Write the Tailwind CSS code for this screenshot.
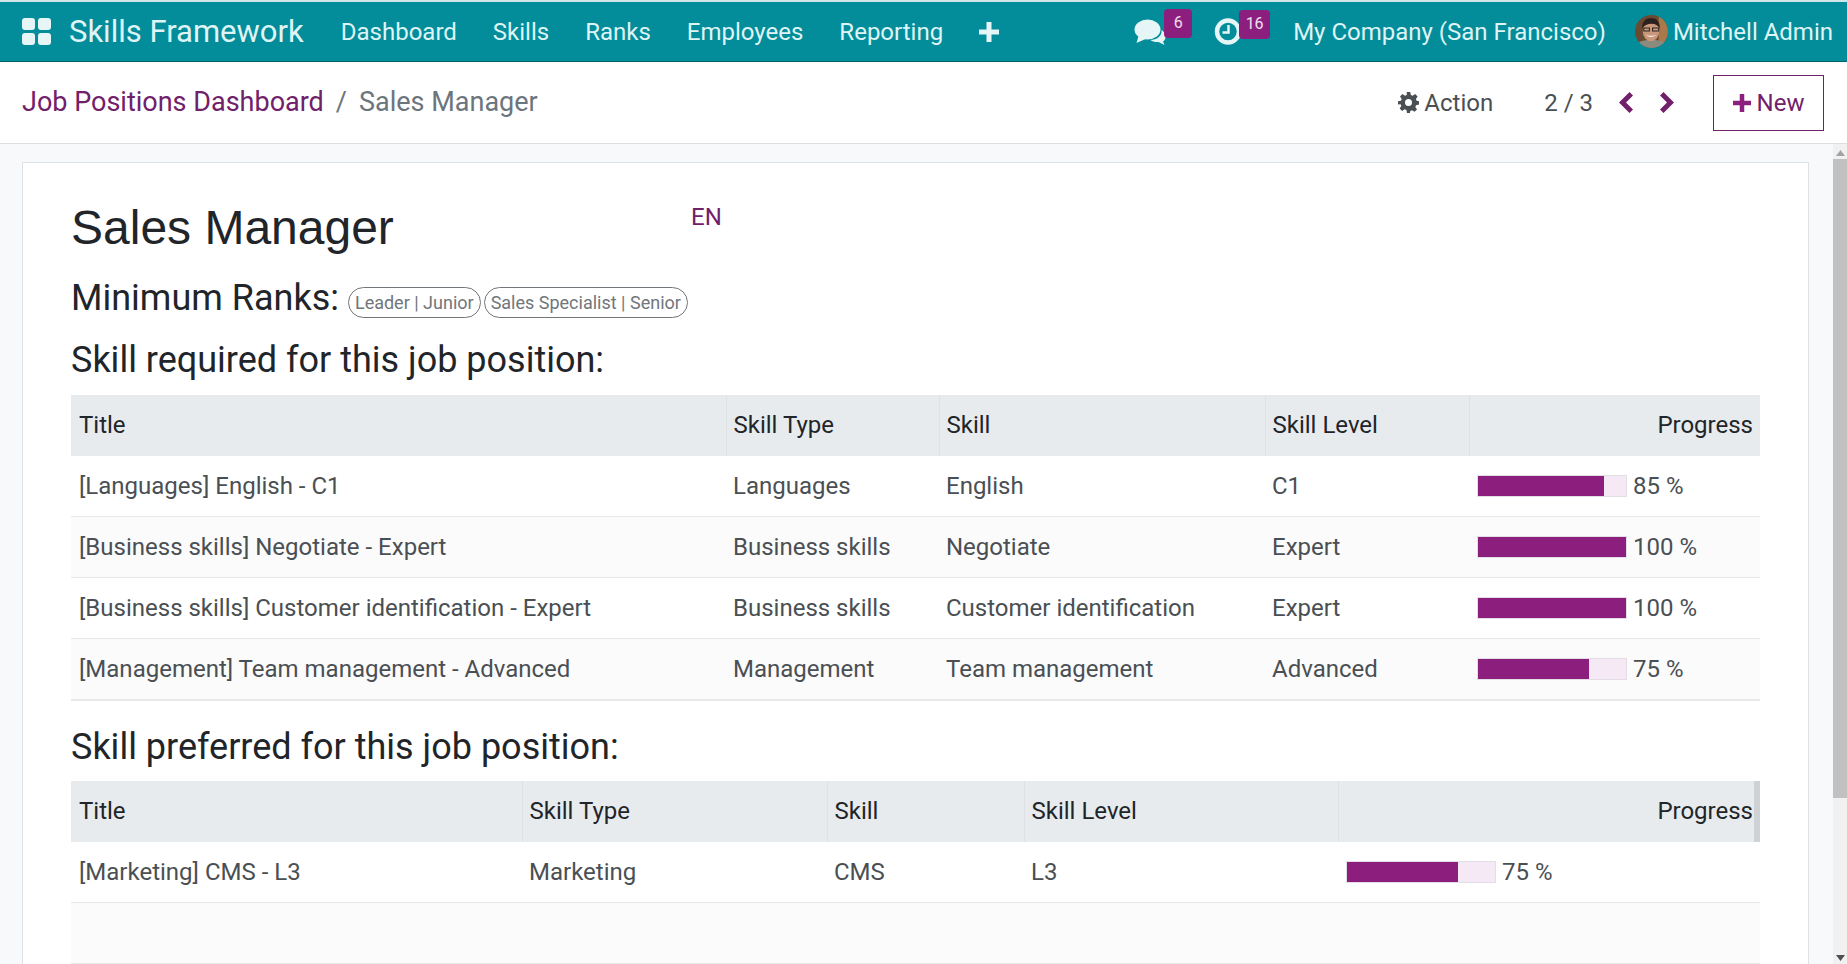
<!DOCTYPE html>
<html lang="en">
<head>
<meta charset="utf-8">
<title>Skills Framework</title>
<script src="https://cdn.jsdelivr.net/npm/@tailwindcss/browser@4"></script>
</head>
<body class="h-screen overflow-hidden bg-white font-['Roboto',sans-serif] text-[24px] text-[#4a4f54]">
<div class="flex h-full flex-col">
  <div class="h-[2px] shrink-0 bg-[#cfe6e8]"></div>
  <nav class="flex h-[60px] shrink-0 items-center border-b border-[#04606a] bg-[#038d9a] text-[#dff4f5]">
    <svg class="ml-[22px] h-[27px] w-[29px]" viewBox="0 0 29 27" fill="#e6f6f7"><rect x="0" y="0" width="13" height="12" rx="3"/><rect x="16" y="0" width="13" height="12" rx="3"/><rect x="0" y="15" width="13" height="12" rx="3"/><rect x="16" y="15" width="13" height="12" rx="3"/></svg>
    <span class="ml-[18px] pt-[1px] text-[31px]">Skills Framework</span>
    <div class="ml-[37px] flex items-center gap-[36px]">
      <span>Dashboard</span><span>Skills</span><span>Ranks</span><span>Employees</span><span>Reporting</span>
      <svg class="h-[20px] w-[20px]" viewBox="0 0 20 20" fill="#e6f6f7"><path d="M7.500 0h5v7.500h7.500v5h-7.500v7.500h-5v-7.500h-7.500v-5h7.500z"/></svg>
    </div>
    <div class="ml-auto flex items-center">
      <span class="relative mr-[47px] flex">
        <svg class="h-[26px] w-[33px]" viewBox="0 0 32 26" fill="#e6f6f7"><ellipse cx="13" cy="10.500" rx="13" ry="10"/><path d="M4 17 2 24l9-4z"/><path d="M27 11c3 2 5 5 4 8-.5 2-1.500 3-2.500 3.500l1.500 3.500-6-3c-3 .3-6-.3-8-2 6 0 12-4 11-10z"/></svg>
        <span class="absolute left-[30px] top-[-10px] flex h-[29px] w-[28px] items-start justify-center rounded-[4px] bg-[#8c1f7e] pt-[2px] text-[16px] text-[#f0e0ee]">6</span>
      </span>
      <span class="relative flex">
        <svg class="h-[27px] w-[28px]" viewBox="0 0 27 27" fill="none" stroke="#e6f6f7"><circle cx="13.500" cy="13.500" r="11" stroke-width="4.500"/><path d="M14 7v7.500H8" stroke-width="2.500"/></svg>
        <span class="absolute left-[25px] top-[-8px] flex h-[29px] w-[31px] items-start justify-center rounded-[4px] bg-[#8c1f7e] pt-[2px] text-[16px] text-[#f0e0ee]">16</span>
      </span>
      <span class="ml-[51px]">My Company (San Francisco)</span>
      <svg class="ml-[29px] h-[33px] w-[33px]" viewBox="0 0 32 32">
        <defs><clipPath id="av"><circle cx="16" cy="16" r="16"/></clipPath></defs>
        <g clip-path="url(#av)">
          <rect width="32" height="32" fill="#6b4a33"/>
          <rect x="23" width="9" height="32" fill="#a9794a"/>
          <path d="M0 32c1-6 8-8 16-8s15 2 16 8z" fill="#8a8a7e"/>
          <ellipse cx="15.500" cy="15.500" rx="8" ry="10" fill="#c9977a"/>
          <path d="M7 13c-.5-7 4-10 8.500-10S24.500 6 24 13c-2-3-4-4.500-8-4.500S9 10 7 13z" fill="#2c211c"/>
          <path d="M8.500 12.500h5.500v3H8.500zM17 12.500h6v3h-6z" fill="none" stroke="#2b2522" stroke-width="1"/>
          <path d="M10.500 19.500c3 2.500 7 2.500 10 0-3 .8-7 .8-10 0z" fill="#f4efe9"/>
        </g>
      </svg>
      <span class="ml-[5px] mr-[14px]">Mitchell Admin</span>
    </div>
  </nav>

  <header class="flex h-[82px] shrink-0 items-center border-b border-[#dcdfe2] bg-white">
    <div class="ml-[22px] flex items-center text-[27px]">
      <span class="text-[#71206a]">Job Positions Dashboard</span>
      <span class="mx-[12px] text-[#6c757d]">/</span>
      <span class="text-[#6c757d]">Sales Manager</span>
    </div>
    <div class="ml-auto flex items-center">
      <svg class="h-[21px] w-[21px]" viewBox="0 0 24 24" fill="#4a4f54"><path fill-rule="evenodd" d="M10 0h4l.7 3.400 2 .8L19.600 2.300l2.800 2.800-1.900 2.900.8 2L24 10.700v3.600l-3.400.7-.8 2 1.900 2.900-2.800 2.800-2.900-1.900-2 .8L13.700 24h-3.400l-.7-3.400-2-.8-2.900 1.900-2.800-2.800 1.900-2.900-.8-2L0 14.300v-3.600L3.400 10l.8-2-1.900-2.900 2.800-2.800 2.900 1.900 2-.8zM12 8a4 4 0 1 0 0 8 4 4 0 0 0 0-8z"/></svg>
      <span class="ml-[5px]">Action</span>
      <span class="ml-[51px]">2 / 3</span>
      <svg class="ml-[26px] h-[21px] w-[14px]" viewBox="0 0 14 21" fill="#71206a"><path d="M10.500 0 14 3.500 7 10.500l7 7-3.500 3.500L0 10.500z"/></svg>
      <svg class="ml-[27px] h-[21px] w-[14px]" viewBox="0 0 14 21" fill="#71206a"><path d="M3.500 0 0 3.500l7 7-7 7L3.500 21 14 10.500z"/></svg>
      <button class="ml-[39px] mr-[23px] flex h-[56px] w-[111px] items-center justify-center border border-[#71206a] text-[#71206a]">
        <svg class="mr-[6px] h-[18px] w-[18px]" viewBox="0 0 20 20" fill="#8c1f7e"><path d="M7.500 0h5v7.500h7.500v5h-7.500v7.500h-5v-7.500h-7.500v-5h7.500z"/></svg>New
      </button>
    </div>
  </header>

  <div class="flex min-h-0 flex-1 overflow-hidden bg-[#f8f9fa]">
    <main class="min-w-0 flex-1 pl-[22px] pr-[24px] pt-[18px]">
      <div class="h-[900px] border border-[#dee2e6] bg-white pl-[48px] pr-[48px]">
        <div class="flex h-[110px] items-start">
          <h1 class="mt-[37px] w-[620px] font-['Liberation_Sans',sans-serif] text-[48px] leading-[56px] text-[#212529]">Sales Manager</h1>
          <span class="mt-[36px] text-[#71206a]">EN</span>
        </div>
        <div class="flex h-[50px] items-center">
          <span class="text-[36px] leading-[50px] text-[#212529]">Minimum Ranks:</span>
          <span class="ml-[9px] mt-[9px] flex h-[31px] items-center rounded-full border border-[#71767b] px-[6px] text-[18px] text-[#71767b]">Leader | Junior</span>
          <span class="ml-[3px] mt-[9px] flex h-[31px] items-center rounded-full border border-[#71767b] px-[6px] text-[18px] text-[#71767b]">Sales Specialist | Senior</span>
        </div>
        <h2 class="mt-[13px] h-[59px] text-[36px] leading-[48px] text-[#212529]">Skill required for this job position:</h2>

        <table class="w-[1689px] table-fixed border-b-2 border-[#e6e8ea]">
          <thead>
            <tr class="h-[61px] bg-[#e8ebee] text-[#212529]">
              <th class="w-[655px] px-[8px] pb-[2px] text-left font-normal">Title</th>
              <th class="w-[213px] border-l border-[#dfe2e5] px-[7px] pb-[2px] text-left font-normal">Skill Type</th>
              <th class="w-[326px] border-l border-[#dfe2e5] px-[7px] pb-[2px] text-left font-normal">Skill</th>
              <th class="w-[204px] border-l border-[#dfe2e5] px-[7px] pb-[2px] text-left font-normal">Skill Level</th>
              <th class="border-l border-[#dfe2e5] px-[7px] pb-[2px] text-right font-normal">Progress</th>
            </tr>
          </thead>
          <tbody>
            <tr class="h-[60px] border-b border-[#e6e8ea] bg-white">
              <td class="px-[8px]">[Languages] English - C1</td><td class="px-[7px]">Languages</td><td class="px-[7px]">English</td><td class="px-[7px]">C1</td>
              <td class="px-[8px]"><div class="flex items-center"><div class="h-[22px] w-[150px] border border-[#e3dde6] bg-[#f5e9f5]"><div class="h-full w-[85%] bg-[#8c1f7e]"></div></div><span class="ml-[6px]">85 %</span></div></td>
            </tr>
            <tr class="h-[61px] border-b border-[#e6e8ea] bg-[#fbfbfb]">
              <td class="px-[8px]">[Business skills] Negotiate - Expert</td><td class="px-[7px]">Business skills</td><td class="px-[7px]">Negotiate</td><td class="px-[7px]">Expert</td>
              <td class="px-[8px]"><div class="flex items-center"><div class="h-[22px] w-[150px] border border-[#e3dde6] bg-[#f5e9f5]"><div class="h-full w-full bg-[#8c1f7e]"></div></div><span class="ml-[6px]">100 %</span></div></td>
            </tr>
            <tr class="h-[61px] border-b border-[#e6e8ea] bg-white">
              <td class="px-[8px]">[Business skills] Customer identification - Expert</td><td class="px-[7px]">Business skills</td><td class="px-[7px]">Customer identification</td><td class="px-[7px]">Expert</td>
              <td class="px-[8px]"><div class="flex items-center"><div class="h-[22px] w-[150px] border border-[#e3dde6] bg-[#f5e9f5]"><div class="h-full w-full bg-[#8c1f7e]"></div></div><span class="ml-[6px]">100 %</span></div></td>
            </tr>
            <tr class="h-[62px] bg-[#fbfbfb]">
              <td class="px-[8px]">[Management] Team management - Advanced</td><td class="px-[7px]">Management</td><td class="px-[7px]">Team management</td><td class="px-[7px]">Advanced</td>
              <td class="px-[8px]"><div class="flex items-center"><div class="h-[22px] w-[150px] border border-[#e3dde6] bg-[#f5e9f5]"><div class="h-full w-[75%] bg-[#8c1f7e]"></div></div><span class="ml-[6px]">75 %</span></div></td>
            </tr>
          </tbody>
        </table>

        <h2 class="mt-[22px] h-[58px] text-[36px] leading-[48px] text-[#212529]">Skill preferred for this job position:</h2>

        <table class="w-[1689px] table-fixed">
          <thead>
            <tr class="h-[61px] bg-[#e8ebee] text-[#212529]">
              <th class="w-[451px] px-[8px] pb-[2px] text-left font-normal">Title</th>
              <th class="w-[305px] border-l border-[#dfe2e5] px-[7px] pb-[2px] text-left font-normal">Skill Type</th>
              <th class="w-[197px] border-l border-[#dfe2e5] px-[7px] pb-[2px] text-left font-normal">Skill</th>
              <th class="w-[314px] border-l border-[#dfe2e5] px-[7px] pb-[2px] text-left font-normal">Skill Level</th>
              <th class="relative border-l border-[#dfe2e5] px-[7px] pb-[2px] text-right font-normal">Progress<span class="absolute inset-y-0 right-0 w-[6px] bg-[#cfd2d5]"></span></th>
            </tr>
          </thead>
          <tbody>
            <tr class="h-[60px] border-b border-[#e6e8ea] bg-white">
              <td class="px-[8px]">[Marketing] CMS - L3</td><td class="px-[7px]">Marketing</td><td class="px-[7px]">CMS</td><td class="px-[7px]">L3</td>
              <td class="px-[8px]"><div class="flex items-center"><div class="h-[22px] w-[150px] border border-[#e3dde6] bg-[#f5e9f5]"><div class="h-full w-[75%] bg-[#8c1f7e]"></div></div><span class="ml-[6px]">75 %</span></div></td>
            </tr>
            <tr class="h-[61px] border-b border-[#e6e8ea] bg-[#fbfbfb]"><td colspan="5"></td></tr>
          </tbody>
        </table>
      </div>
    </main>
    <div class="flex w-[14px] shrink-0 flex-col items-center bg-[#f1f1f1]">
      <svg class="mt-[6px] h-[6px] w-[9px]" viewBox="0 0 9 6" fill="#a3a3a3"><path d="M4.500 0 9 6H0z"/></svg>
      <div class="mt-[3px] h-[639px] w-full bg-[#c1c1c1]"></div>
      <svg class="mt-auto mb-[3px] h-[6px] w-[9px]" viewBox="0 0 9 6" fill="#505050"><path d="M0 0h9L4.500 6z"/></svg>
    </div>
  </div>
</div>
</body>
</html>
